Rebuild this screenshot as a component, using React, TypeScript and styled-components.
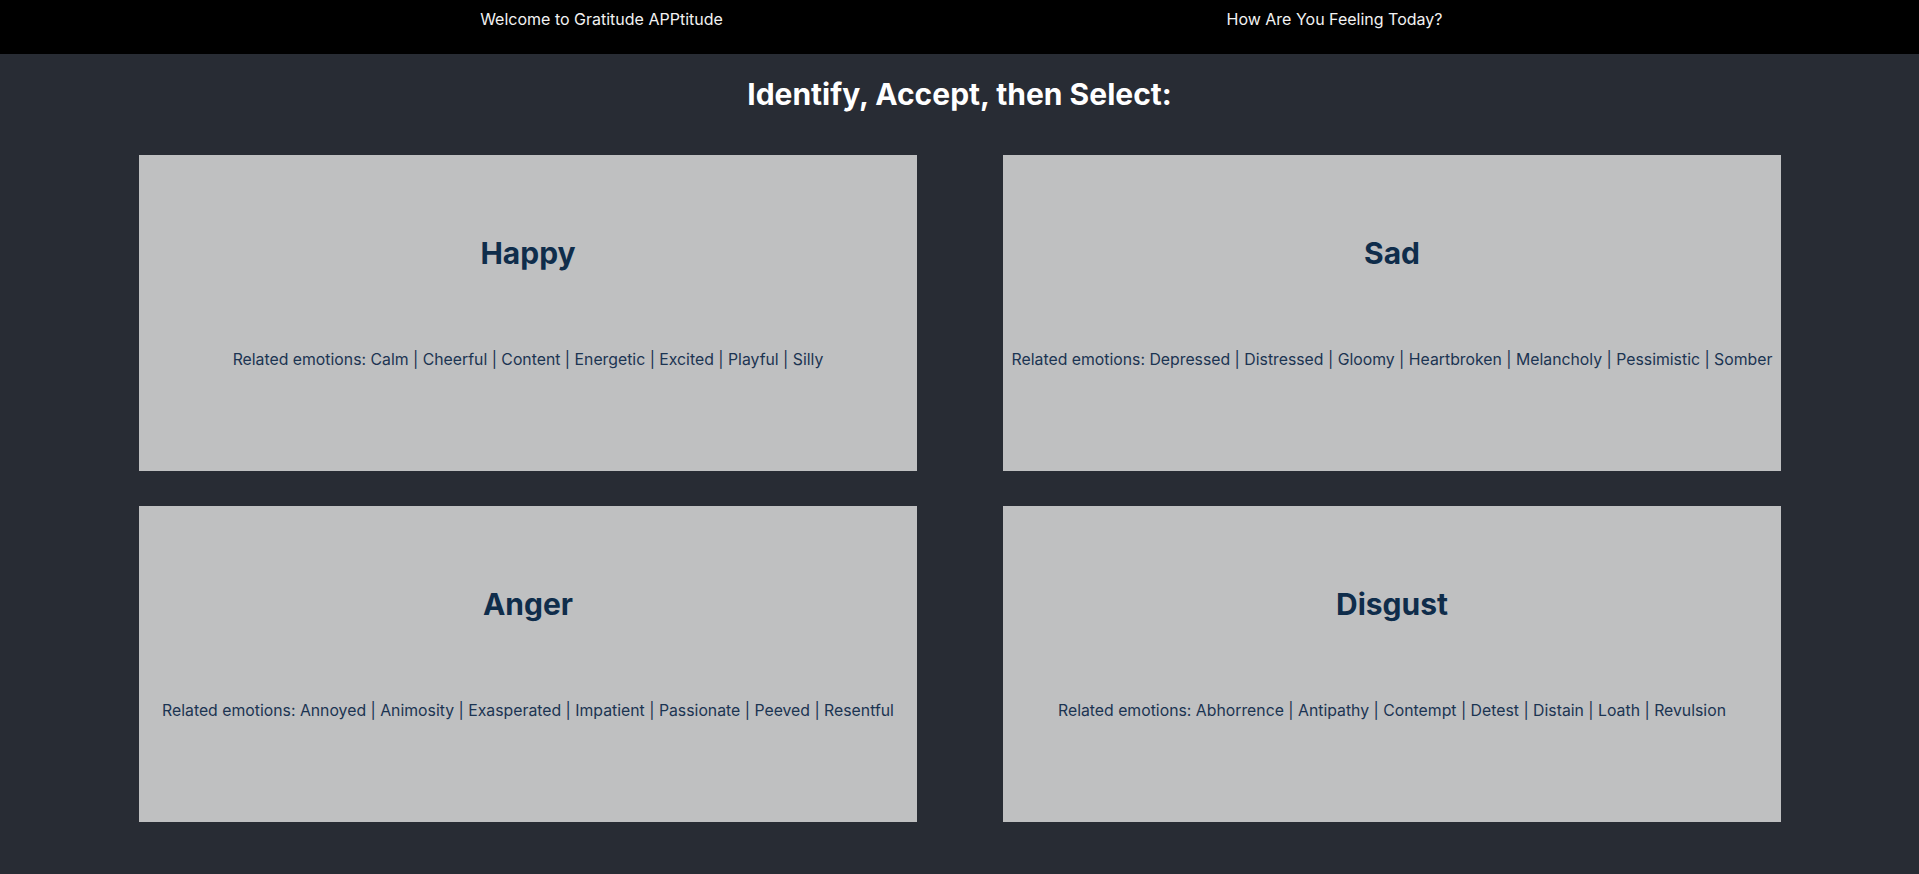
import React from 'react';
import styled, { createGlobalStyle } from 'styled-components';

const GlobalStyle = createGlobalStyle`
    html, body {
        margin: 0;
        padding: 0;
        background-color: #282c34;
        font-family: Inter, "Noto Sans", sans-serif;
    }
`;

const Page = styled.div`
    min-height: 874px;
    background-color: #282c34;
`;

const NavBar = styled.nav`
    height: 54px;
    box-sizing: border-box;
    padding: 10px 218px 0 235px;
    background-color: #000;
    display: grid;
    grid-template-columns: 1fr 1fr;
    align-items: start;
`;

const NavItem = styled.a`
    text-align: center;
    color: #f2f2f2;
    font-size: 16px;
    line-height: 19px;
    text-decoration: none;
    cursor: pointer;
`;

const Title = styled.h1`
    margin: 22px 0 43px;
    text-align: center;
    color: #fff;
    font-size: 30px;
    font-weight: 700;
    line-height: 36px;
`;

const Grid = styled.div`
    display: grid;
    grid-template-columns: 1fr 1fr;
    column-gap: 86px;
    row-gap: 35px;
    padding: 0 138px 0 139px;
`;

const Card = styled.div`
    height: 316px;
    box-sizing: border-box;
    padding-top: 80px;
    background-color: #bfc0c1;
    display: flex;
    flex-direction: column;
    align-items: center;
    cursor: pointer;
`;

const Emotion = styled.h2`
    margin: 0;
    color: #0f2d4b;
    font-size: 30px;
    font-weight: 700;
    line-height: 36px;
`;

const Related = styled.p`
    margin: 79px 0 0;
    color: #1b3452;
    font-size: 15.8px;
    line-height: 19px;
    white-space: nowrap;
`;

const emotions = [
    { name: 'Happy', related: ['Calm', 'Cheerful', 'Content', 'Energetic', 'Excited', 'Playful', 'Silly'] },
    { name: 'Sad', related: ['Depressed', 'Distressed', 'Gloomy', 'Heartbroken', 'Melancholy', 'Pessimistic', 'Somber'] },
    { name: 'Anger', related: ['Annoyed', 'Animosity', 'Exasperated', 'Impatient', 'Passionate', 'Peeved', 'Resentful'] },
    { name: 'Disgust', related: ['Abhorrence', 'Antipathy', 'Contempt', 'Detest', 'Distain', 'Loath', 'Revulsion'] },
];

const App = () => {
    return (
        <Page>
            <GlobalStyle />
            <NavBar>
                <NavItem>Welcome to Gratitude APPtitude</NavItem>
                <NavItem>How Are You Feeling Today?</NavItem>
            </NavBar>
            <Title>Identify, Accept, then Select:</Title>
            <Grid>
                {emotions.map((e) => (
                    <Card key={e.name}>
                        <Emotion>{e.name}</Emotion>
                        <Related>Related emotions: {e.related.join(' | ')}</Related>
                    </Card>
                ))}
            </Grid>
        </Page>
    );
};

export default App;
